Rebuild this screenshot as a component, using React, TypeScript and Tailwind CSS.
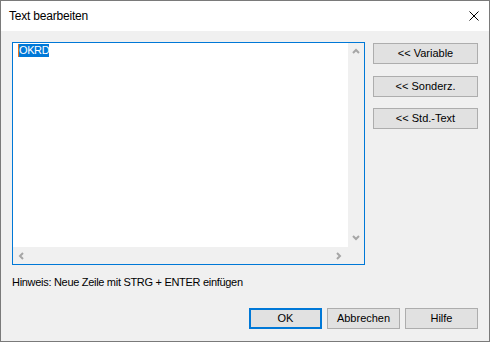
import React from "react";

const Chevron = ({ dir }: { dir: "up" | "down" | "left" | "right" }) => {
  const paths: Record<string, string> = {
    up: "M1 5 L4 2 L7 5",
    down: "M1 2 L4 5 L7 2",
    left: "M5 1 L2 4 L5 7",
    right: "M2 1 L5 4 L2 7",
  };
  return (
    <svg width="8" height="8" viewBox="0 0 8 8" className="block">
      <path d={paths[dir]} fill="none" stroke="#a6a6a6" strokeWidth="2" />
    </svg>
  );
};

const Btn = ({ children, w, def }: { children: React.ReactNode; w: string; def?: boolean }) => (
  <div
    className={`${w} h-[21px] flex items-center justify-center bg-[#e1e1e1] text-[11px] text-black ${
      def ? "border-2 border-[#0078d7]" : "border border-[#adadad]"
    }`}
  >
    {children}
  </div>
);

export default function App() {
  return (
    <div
      className="w-[490px] h-[342px] border border-[#7a7a7a] bg-[#f0f0f0] flex flex-col"
      style={{ fontFamily: '"Liberation Sans", Arial, sans-serif' }}
    >
      <div className="h-[30px] bg-white flex items-center justify-between pl-[8px] pr-[10px] shrink-0">
        <span className="text-[12px] text-black leading-none tracking-[-0.2px]">Text bearbeiten</span>
        <svg width="10" height="10" viewBox="0 0 10 10" className="block">
          <path d="M0.5 0.5 L9.5 9.5 M9.5 0.5 L0.5 9.5" stroke="#000" strokeWidth="1" />
        </svg>
      </div>
      <div className="flex-1 flex flex-col px-[11px] pt-[11px]">
        <div className="flex">
          <div className="w-[353px] h-[223px] border border-[#0078d7] flex flex-col">
            <div className="flex flex-1 min-h-0">
              <div className="flex-1 bg-white pl-[5px] pt-[1px]">
                <div className="flex items-center h-[13px]">
                  <span className="relative bg-[#0078d7] text-white text-[11px] leading-[13px] h-[13px] pl-[1px] tracking-[-0.4px]">
                    OKRD
                    <span className="absolute left-0 top-0 w-[1px] h-[13px] bg-[#e8731c]" />
                  </span>
                </div>
              </div>
              <div className="w-[16px] bg-[#f0f0f0] flex flex-col justify-between items-center py-[5px]">
                <Chevron dir="up" />
                <Chevron dir="down" />
              </div>
            </div>
            <div className="h-[17px] bg-[#f0f0f0] flex items-center justify-between pl-[5px] pr-[21px] shrink-0">
              <Chevron dir="left" />
              <Chevron dir="right" />
            </div>
          </div>
          <div className="ml-[8px] mt-[1px] flex flex-col">
            <Btn w="w-[105px]">&lt;&lt; Variable</Btn>
            <div className="mt-[12px]">
              <Btn w="w-[105px]">&lt;&lt; Sonderz.</Btn>
            </div>
            <div className="mt-[11px]">
              <Btn w="w-[105px]">&lt;&lt; Std.-Text</Btn>
            </div>
          </div>
        </div>
        <div className="mt-[9px] h-[16px] leading-[16px] text-[11px] text-black tracking-[-0.3px]">
          Hinweis: Neue Zeile mit STRG + ENTER einfügen
        </div>
        <div className="mt-[18px] flex justify-end gap-[5px]">
          <Btn w="w-[73px]" def>
            OK
          </Btn>
          <Btn w="w-[73px]">Abbrechen</Btn>
          <Btn w="w-[73px]">Hilfe</Btn>
        </div>
      </div>
    </div>
  );
}
